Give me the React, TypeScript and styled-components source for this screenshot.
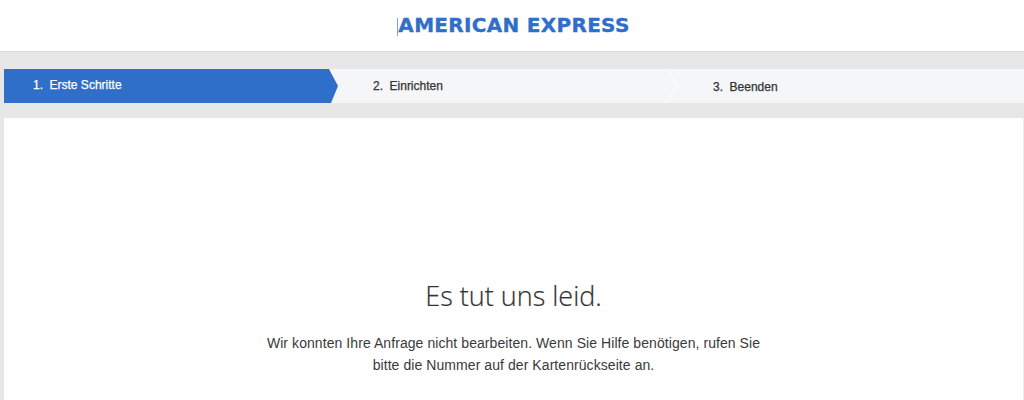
import React from 'react'
import styled, { createGlobalStyle } from 'styled-components'

const GlobalStyle = createGlobalStyle`
  html, body {
    margin: 0;
    padding: 0;
    background: #e7e7e7;
    font-family: "Liberation Sans", Arial, sans-serif;
    overflow: hidden;
  }
`

const Page = styled.div`
  width: 1024px;
  height: 400px;
  overflow: hidden;
`

const Header = styled.header`
  box-sizing: border-box;
  height: 52px;
  background: #fff;
  border-bottom: 1px solid #d9d9d9;
  display: flex;
  align-items: flex-start;
  justify-content: center;
  padding-top: 13px;
`

const Logo = styled.div`
  display: flex;
  align-items: center;
  margin-left: 3px;
  color: #2f6fc9;
  font-family: "DejaVu Sans", "Liberation Sans", sans-serif;
  font-size: 20px;
  font-weight: 700;
  line-height: 24px;
  letter-spacing: 0.3px;
  white-space: nowrap;
  -webkit-text-stroke: 0.35px #2f6fc9;
  &::before {
    content: '';
    width: 1px;
    height: 18px;
    margin-top: 3px;
    background: #7fa6de;
  }
`

const Steps = styled.ol`
  list-style: none;
  display: flex;
  height: 34px;
  margin: 17px 0 15px 4px;
  padding: 0;
  background: #f5f6f8;
`

const Step = styled.li<{ $active?: boolean; $width: number; $inset: number; $shift: number }>`
  position: relative;
  box-sizing: border-box;
  width: ${p => p.$width}px;
  padding-left: ${p => p.$inset}px;
  padding-top: ${p => Math.max(p.$shift, 0)}px;
  padding-bottom: ${p => Math.max(-p.$shift, 0)}px;
  display: flex;
  align-items: center;
  gap: 6.5px;
  font-size: 12px;
  -webkit-text-stroke: 0.25px currentColor;
  color: ${p => (p.$active ? '#fff' : '#333')};
  background: ${p => (p.$active ? '#2f6fc9' : 'transparent')};
  clip-path: ${p =>
    p.$active ? 'polygon(0 0, 325px 0, 100% 50%, 327px 100%, 0 100%)' : 'none'};
`

const Divider = styled.svg`
  position: absolute;
  right: 0;
  top: 0;
  width: 11px;
  height: 34px;
`

const Card = styled.main`
  margin-left: 4px;
  height: 282px;
  background: #fff;
  border-right: 1px solid #ececec;
  display: flex;
  flex-direction: column;
  align-items: center;
  box-sizing: border-box;
  padding-top: 160px;
`

const Title = styled.h1`
  margin: 0;
  font-family: "Open Sans", "Liberation Sans", sans-serif;
  font-size: 27px;
  font-weight: 300;
  line-height: 36px;
  color: #333;
  -webkit-text-stroke: 0.2px #333;
`

const Message = styled.p`
  width: 520px;
  margin: 18px 0 0;
  font-size: 14px;
  line-height: 22px;
  letter-spacing: 0.07px;
  text-align: center;
  color: #3a3a3a;
`

const steps = [
  { label: 'Erste Schritte', width: 334, inset: 29, shift: -2 },
  { label: 'Einrichten', width: 340, inset: 35, shift: -1 },
  { label: 'Beenden', width: 346, inset: 35, shift: 2 },
]

export default function App() {
  return (
    <Page>
      <GlobalStyle />
      <Header>
        <Logo>AMERICAN EXPRESS</Logo>
      </Header>
      <Steps>
        {steps.map((s, i) => (
          <Step key={s.label} $active={i === 0} $width={s.width} $inset={s.inset} $shift={s.shift}>
            <span>{i + 1}.</span>
            <span>{s.label}</span>
            {i === 1 && (
              <Divider viewBox="0 0 11 34">
                <path d="M0 0 L10 17 L0 34" fill="none" stroke="#ffffff" strokeWidth="1" />
              </Divider>
            )}
          </Step>
        ))}
      </Steps>
      <Card>
        <Title>Es tut uns leid.</Title>
        <Message>
          Wir konnten Ihre Anfrage nicht bearbeiten. Wenn Sie Hilfe benötigen, rufen Sie bitte die
          Nummer auf der Kartenrückseite an.
        </Message>
      </Card>
    </Page>
  )
}
